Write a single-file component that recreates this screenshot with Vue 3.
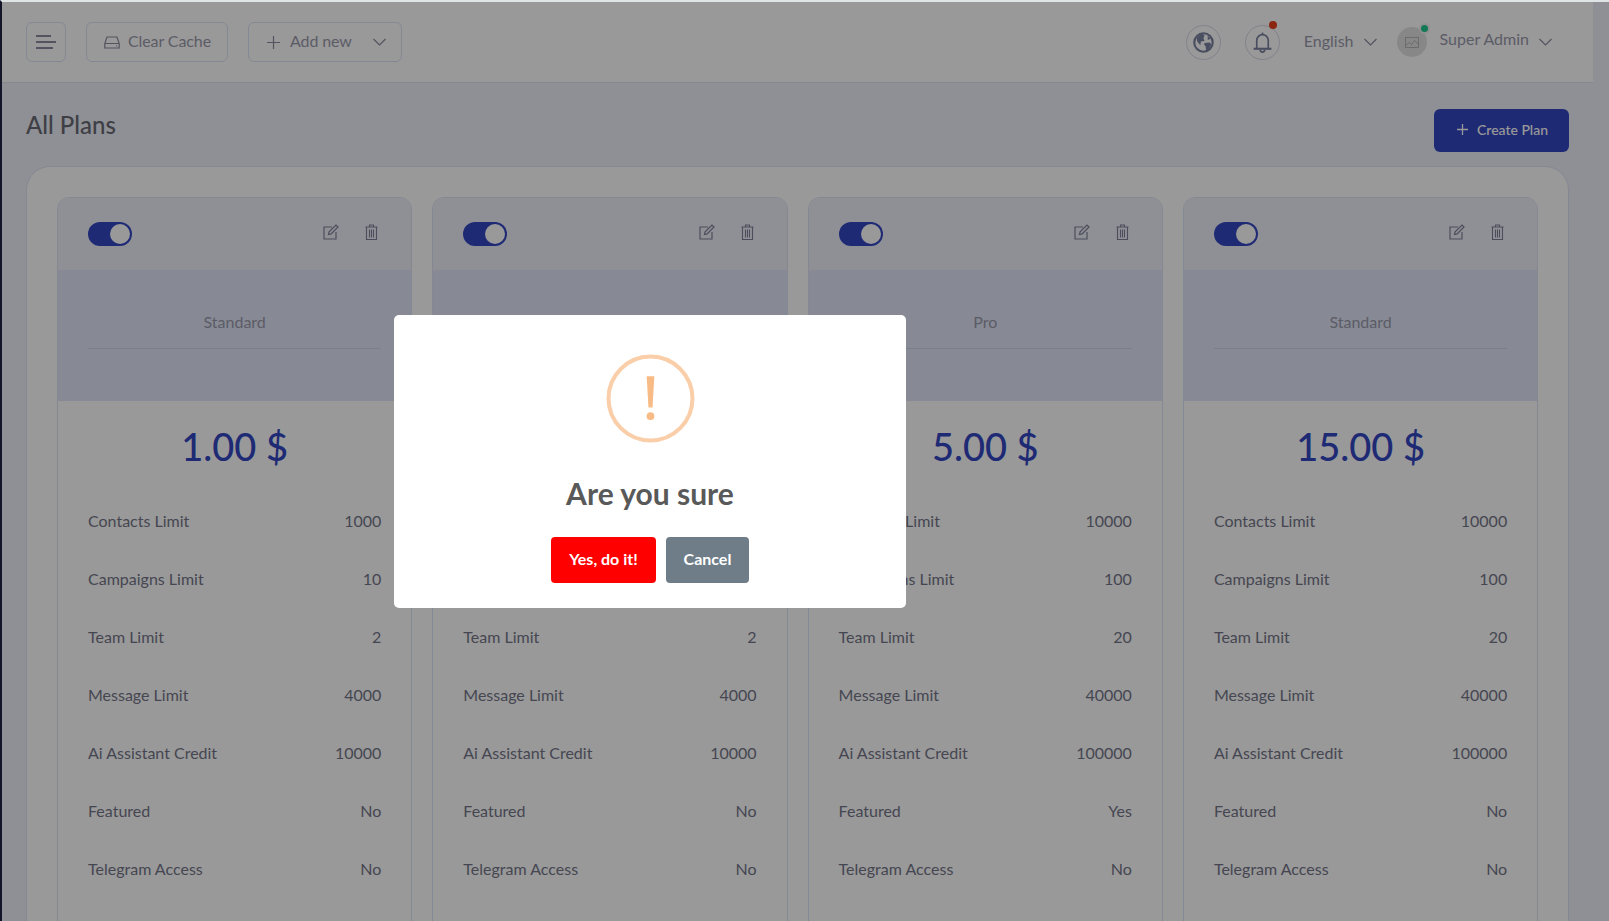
<script setup>
const labels = [
  "Contacts Limit",
  "Campaigns Limit",
  "Team Limit",
  "Message Limit",
  "Ai Assistant Credit",
  "Featured",
  "Telegram Access",
  "Calling Limit",
];

const plans = [
  { name: "Standard", price: "1.00 $", values: ["1000", "10", "2", "4000", "10000", "No", "No", "No"] },
  { name: "Basic", price: "2.00 $", values: ["1000", "10", "2", "4000", "10000", "No", "No", "No"] },
  { name: "Pro", price: "5.00 $", values: ["10000", "100", "20", "40000", "100000", "Yes", "No", "No"] },
  { name: "Standard", price: "15.00 $", values: ["10000", "100", "20", "40000", "100000", "No", "No", "No"] },
];
</script>

<template>
  <div class="root">
    <div class="screen">
      <header class="topbar">
        <button class="nav-btn menu-btn">
          <svg width="20" height="16" viewBox="0 0 20 16" fill="none" stroke="#8e8a9e" stroke-width="2">
            <path d="M0 2h15M0 8h20M0 14h17" />
          </svg>
        </button>
        <button class="nav-btn cache-btn">
          <svg width="16" height="13" viewBox="0 0 16 13" fill="none" stroke="#8e8a9e" stroke-width="1.2">
            <path d="M3 1h10l2.2 6.5V12H.8V7.5zM.8 7.5h14.4" />
            <circle cx="12.6" cy="9.8" r=".6" fill="#8e8a9e" stroke="none" />
          </svg>
          <span class="nav-label">Clear Cache</span>
        </button>
        <button class="nav-btn add-btn">
          <svg width="13" height="13" viewBox="0 0 13 13" stroke="#8e8a9e" stroke-width="1.2">
            <path d="M6.5 0v13M0 6.5h13" />
          </svg>
          <span class="nav-label">Add new</span>
          <svg class="add-chevron" width="13" height="8" viewBox="0 0 13 8" fill="none" stroke="#8e8a9e" stroke-width="1.2">
            <path d="M.5 1l6 6 6-6" />
          </svg>
        </button>

        <div class="topbar-right">
          <span class="round-btn">
            <svg width="21" height="21" viewBox="0 0 20 20">
              <circle cx="10" cy="10" r="8.800" fill="none" stroke="#7b80a0" stroke-width="2" />
              <path d="M3.500 5.500l4.500-4 3 1.500-1 3 1 2.500-3.500 .5-.5 3.500-3-3.500zM11 10.500l5-.5 1.500 2-2.500 5-2.500 .5-.5-4-1.500-1.500zM14 3.500l3 3-3 1z" fill="#7b80a0" />
            </svg>
          </span>
          <span class="round-btn bell">
            <svg width="19" height="23" viewBox="0 0 18 22" fill="none" stroke="#7b80a0" stroke-width="1.600">
              <path d="M3.500 16.500V9a5.500 5.500 0 0 1 11 0v7.500" />
              <path d="M9 1.500v2" />
              <path d="M.5 17h17" stroke-width="2" />
              <path d="M6.800 18a2.200 2.200 0 0 0 4.400 0" />
            </svg>
            <i class="bell-dot"></i>
          </span>
          <span class="lang">English</span>
          <svg class="lang-chevron" width="13" height="8" viewBox="0 0 13 8" fill="none" stroke="#8e8a9e" stroke-width="1.2">
            <path d="M.5 1l6 6 6-6" />
          </svg>
          <span class="avatar">
            <svg width="14" height="11" viewBox="0 0 14 11" fill="none" stroke="#a8a8a8" stroke-width=".8">
              <rect x=".5" y=".5" width="13" height="10" />
              <path d="M.5 8.500l4-3 2 2 3-4 4 4" />
            </svg>
            <i class="avatar-dot"></i>
          </span>
          <span class="user">Super Admin</span>
          <svg class="user-chevron" width="13" height="8" viewBox="0 0 13 8" fill="none" stroke="#8e8a9e" stroke-width="1.2">
            <path d="M.5 1l6 6 6-6" />
          </svg>
        </div>
      </header>

      <main class="content">
        <div class="title-row">
          <h1 class="title">All Plans</h1>
          <button class="create-btn">
            <svg width="11" height="11" viewBox="0 0 11 11" stroke="#fff" stroke-width="1.3">
              <path d="M5.500 0v11M0 5.500h11" />
            </svg>
            Create Plan
          </button>
        </div>

        <section class="panel">
          <article v-for="(plan, i) in plans" :key="i" class="card">
            <div class="card-top">
              <span class="toggle"><i></i></span>
              <svg class="edit-icon" width="16" height="16" viewBox="0 0 16 16" fill="none" stroke="#7d8099" stroke-width="1.200">
                <path d="M9 3H1v12h12V8" />
                <path d="M5.500 10.500l.6-2.600L13 1l2 2-6.900 6.900z" />
              </svg>
              <svg class="trash-icon" width="13" height="16" viewBox="0 0 13 16" fill="none" stroke="#7d8099" stroke-width="1.100">
                <path d="M.5 3h12M4.500 3V1h4v2M1.500 3v12.500h10V3M4.500 5.500v8M6.500 5.500v8M8.500 5.500v8" />
              </svg>
            </div>
            <div class="band">
              <div class="plan-name">{{ plan.name }}</div>
            </div>
            <div class="price">{{ plan.price }}</div>
            <div v-for="(label, j) in labels" :key="label" class="row">
              <span>{{ label }}</span>
              <span>{{ plan.values[j] }}</span>
            </div>
          </article>
        </section>
      </main>

      <div class="overlay">
        <div class="dialog">
          <svg class="warn" width="89" height="89" viewBox="0 0 88 88">
            <circle cx="44" cy="44" r="41.500" fill="none" stroke="#facea8" stroke-width="4" />
            <path d="M40.200 22h7.600l-1.800 31h-4z" fill="#f8bb86" />
            <circle cx="44" cy="61.500" r="3.800" fill="#f8bb86" />
          </svg>
          <h2 class="dialog-title">Are you sure</h2>
          <div class="dialog-actions">
            <button class="btn-yes">Yes, do it!</button>
            <button class="btn-cancel">Cancel</button>
          </div>
        </div>
      </div>
    </div>
  </div>
</template>

<style>
html,
body {
  margin: 0;
  overflow: hidden;
}
</style>

<style scoped>
* {
  box-sizing: border-box;
}
.root {
  width: 1609px;
  height: 921px;
  overflow: hidden;
  border-top: 2px solid #dfe4e4;
  border-left: 2px solid #15152a;
  font-family: Lato, "Noto Sans", sans-serif;
}
.screen {
  position: relative;
  height: 919px;
  overflow: hidden;
  background: #eef0f8;
}
button {
  font-family: inherit;
  cursor: pointer;
}
.topbar {
  width: 1591px;
  height: 81px;
  padding: 0 41px 0 24px;
  display: flex;
  align-items: center;
  gap: 20px;
  background: #fff;
  border-bottom: 1px solid #dce3f4;
}
.nav-btn {
  height: 40px;
  display: flex;
  align-items: center;
  background: transparent;
  border: 1px solid #dce3f4;
  border-radius: 6px;
  color: #9a9aac;
  font-size: 16px;
  letter-spacing: -0.1px;
  padding: 0;
}
.nav-label {
  margin-bottom: 4px;
}
.menu-btn {
  width: 40px;
  justify-content: center;
}
.cache-btn {
  width: 142px;
  padding-left: 17px;
  gap: 8px;
}
.add-btn {
  width: 154px;
  padding-left: 18px;
  gap: 10px;
}
.add-chevron {
  margin-left: 11px;
}
.topbar-right {
  margin-left: auto;
  display: flex;
  align-items: center;
}
.round-btn {
  position: relative;
  width: 35px;
  height: 35px;
  display: flex;
  align-items: center;
  justify-content: center;
  border: 1px solid #d8d9e6;
  border-radius: 50%;
}
.bell {
  margin-left: 24px;
}
.bell-dot {
  position: absolute;
  top: -5px;
  right: 2px;
  width: 8px;
  height: 8px;
  border-radius: 50%;
  background: #e8401c;
}
.lang {
  margin-left: 24px;
  margin-bottom: 4px;
  color: #9a9aac;
  font-size: 16px;
}
.lang-chevron {
  margin-left: 10px;
}
.avatar {
  position: relative;
  margin-left: 20px;
  width: 30px;
  height: 30px;
  display: flex;
  align-items: center;
  justify-content: center;
  border-radius: 50%;
  background: #e2e2e2;
}
.avatar-dot {
  position: absolute;
  top: -2px;
  right: -1px;
  width: 7px;
  height: 7px;
  border-radius: 50%;
  background: #1fc88f;
  box-shadow: 0 0 0 2px #f2f2f2;
}
.user {
  margin-left: 13px;
  margin-top: -8px;
  color: #9a9aac;
  font-size: 16px;
}
.user-chevron {
  margin-left: 10px;
  margin-top: 0;
}
.content {
  padding: 26px 40px 0 24px;
}
.title-row {
  height: 57px;
  display: flex;
  justify-content: space-between;
  align-items: flex-start;
}
.title {
  margin: 0;
  font-size: 24px;
  line-height: 32px;
  font-weight: 500;
  color: #686a74;
}
.create-btn {
  width: 135px;
  height: 43px;
  padding: 0 0 2px 2px;
  display: flex;
  align-items: center;
  justify-content: center;
  gap: 9px;
  border: 0;
  border-radius: 6px;
  background: #3446c3;
  color: #fff;
  font-size: 14px;
  font-weight: 500;
}
.panel {
  width: 1543px;
  padding: 30px 30px 0;
  display: grid;
  grid-template-columns: repeat(4, 355.3px);
  gap: 20px;
  background: #fff;
  border: 1px solid #dce3f4;
  border-radius: 24px;
}
.card {
  border: 1px solid #dce3f4;
  border-radius: 12px;
  overflow: hidden;
}
.card-top {
  height: 72px;
  padding: 0 30px;
  display: flex;
  align-items: center;
  background: #eef0f8;
}
.toggle {
  width: 44px;
  height: 24px;
  display: flex;
  justify-content: flex-end;
  align-items: center;
  padding-right: 2px;
  border-radius: 12px;
  background: #3446c3;
}
.toggle i {
  width: 20px;
  height: 20px;
  border-radius: 50%;
  background: #fff;
}
.edit-icon {
  margin-left: auto;
  margin-top: -5px;
  margin-right: 1px;
}
.trash-icon {
  margin-left: 25px;
  margin-right: 3px;
  margin-top: -5px;
}
.band {
  height: 131px;
  padding: 40px 30px 0;
  background: #e1e6f7;
}
.plan-name {
  height: 39px;
  line-height: 24px;
  text-align: center;
  font-size: 16px;
  color: #9a9aac;
  border-bottom: 1px solid #ced3e8;
}
.price {
  height: 91px;
  line-height: 91px;
  text-align: center;
  font-size: 38px;
  font-weight: 500;
  color: #3446c3;
}
.row {
  height: 58px;
  padding: 0 30px 2px;
  display: flex;
  justify-content: space-between;
  align-items: center;
  font-size: 16px;
  color: #747689;
}
.overlay {
  position: absolute;
  inset: 0;
  display: flex;
  align-items: center;
  justify-content: center;
  padding-right: 311px;
  background: rgba(0, 0, 0, 0.4);
}
.dialog {
  width: 512px;
  height: 293px;
  padding-top: 39px;
  display: flex;
  flex-direction: column;
  align-items: center;
  background: #fff;
  border-radius: 5px;
}
.warn {
  display: block;
}
.dialog-title {
  margin: 30px 0 0;
  font-size: 30px;
  line-height: 40px;
  font-weight: 700;
  color: #595959;
}
.dialog-actions {
  margin-top: 24px;
  display: flex;
  gap: 10px;
}
.dialog-actions button {
  height: 46px;
  padding: 0 0 4px;
  border: 0;
  border-radius: 4px;
  color: #fff;
  font-size: 16px;
  font-weight: 700;
}
.btn-yes {
  width: 105px;
  background: #f00;
}
.btn-cancel {
  width: 83px;
  background: #6e7d88;
}
</style>
